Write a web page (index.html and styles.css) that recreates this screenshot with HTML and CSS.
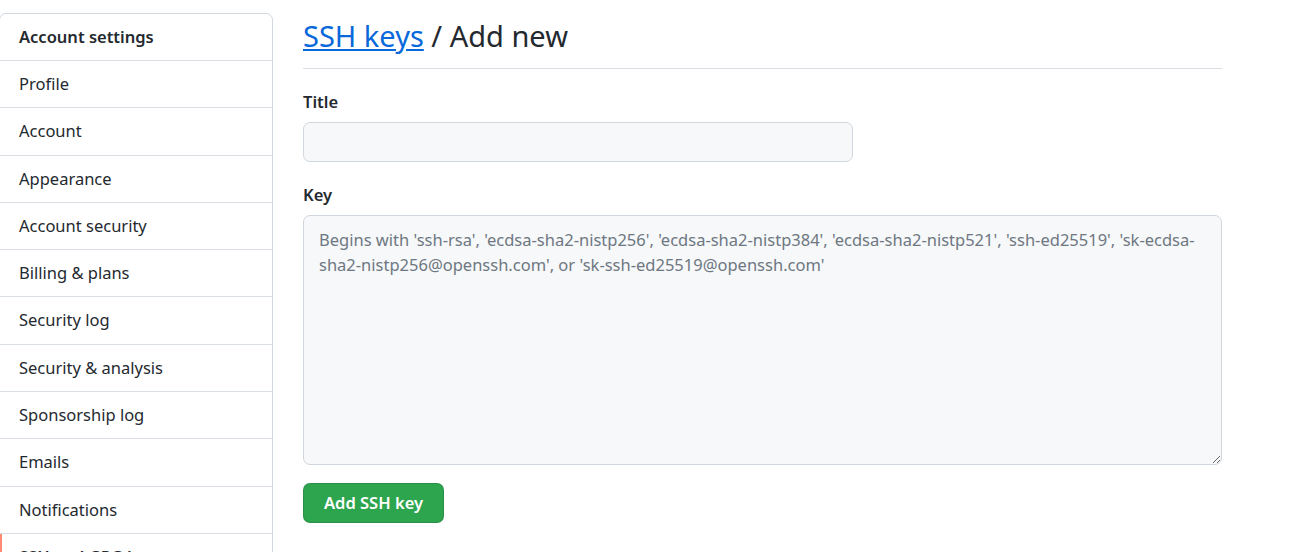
FILE: index.html
```html
<!DOCTYPE html>
<html lang="en">
<head>
<meta charset="utf-8">
<title>SSH keys / Add new</title>
<link rel="stylesheet" href="styles.css">
</head>
<body>
<div class="layout">
  <nav class="menu">
    <div class="menu-heading">Account settings</div>
    <a class="menu-item" href="#">Profile</a>
    <a class="menu-item" href="#">Account</a>
    <a class="menu-item" href="#">Appearance</a>
    <a class="menu-item" href="#">Account security</a>
    <a class="menu-item" href="#">Billing &amp; plans</a>
    <a class="menu-item" href="#">Security log</a>
    <a class="menu-item" href="#">Security &amp; analysis</a>
    <a class="menu-item" href="#">Sponsorship log</a>
    <a class="menu-item" href="#">Emails</a>
    <a class="menu-item" href="#">Notifications</a>
    <a class="menu-item selected" href="#">SSH and GPG keys</a>
    <a class="menu-item" href="#">Repositories</a>
  </nav>
  <main class="main">
    <div class="subhead">
      <h2 class="subhead-heading"><a class="subhead-link" href="#">SSH keys</a> / Add new</h2>
    </div>
    <form class="form">
      <div class="form-group">
        <label class="form-label" for="title">Title</label>
        <input class="form-input" id="title" type="text">
      </div>
      <div class="form-group form-group-last">
        <label class="form-label" for="key">Key</label>
        <textarea class="form-textarea" id="key" placeholder="Begins with 'ssh-rsa', 'ecdsa-sha2-nistp256', 'ecdsa-sha2-nistp384', 'ecdsa-sha2-nistp521', 'ssh-ed25519', 'sk-ecdsa-sha2-nistp256@openssh.com', or 'sk-ssh-ed25519@openssh.com'"></textarea>
      </div>
      <button class="btn-primary" type="button">Add SSH key</button>
    </form>
  </main>
</div>
</body>
</html>
```
FILE: styles.css
```css
html, body {
  margin: 0;
  padding: 0;
  height: 100%;
  overflow: hidden;
  background: #ffffff;
}

body {
  font-family: "Noto Sans", "Liberation Sans", sans-serif;
  font-size: 16.5px;
  line-height: 1.5;
  color: #24292f;
}

.layout {
  display: flex;
  align-items: flex-start;
  gap: 30px;
  padding-top: 13px;
  margin-left: -1px;
}

.menu {
  width: 274px;
  flex: none;
  box-sizing: border-box;
  border: 1px solid #d0d7de;
  border-radius: 7px;
  display: flex;
  flex-direction: column;
}

.menu-heading {
  padding: 10px 19px;
  font-weight: 600;
  line-height: 26px;
  border-bottom: 1px solid #d8dee4;
}

.menu-item {
  position: relative;
  display: block;
  padding: 10px 19px;
  line-height: 26.3px;
  color: #24292f;
  text-decoration: none;
  border-bottom: 1px solid #d8dee4;
}

.menu-item.selected {
  font-weight: 600;
}

.menu-item.selected::before {
  content: "";
  position: absolute;
  left: 0;
  top: 0;
  bottom: 0;
  width: 2px;
  background: #fd8c73;
}

.main {
  width: 919px;
  flex: none;
}

.subhead {
  padding-bottom: 10px;
  border-bottom: 1px solid #d8dee4;
  margin-bottom: 20px;
}

.subhead-heading {
  margin: 0;
  font-size: 29px;
  font-weight: 400;
  line-height: 45px;
}

.subhead-link {
  color: #0969da;
  text-decoration: underline;
}

.form {
  display: flex;
  flex-direction: column;
  align-items: flex-start;
}

.form-group {
  display: flex;
  flex-direction: column;
  align-items: flex-start;
  margin-bottom: 20px;
  width: 100%;
}

.form-group-last {
  margin-bottom: 18px;
}

.form-label {
  font-weight: 600;
  line-height: 26px;
  margin-bottom: 7px;
}

.form-input {
  box-sizing: border-box;
  width: 550px;
  height: 40px;
  padding: 6px 15px;
  font: inherit;
  background: #f6f8fa;
  border: 1px solid #d0d7de;
  border-radius: 7px;
  outline: none;
}

.form-textarea {
  box-sizing: border-box;
  width: 919px;
  height: 250px;
  padding: 11px 15px;
  font: inherit;
  line-height: 25px;
  color: #24292f;
  background: #f6f8fa;
  border: 1px solid #d0d7de;
  border-radius: 7px;
  outline: none;
  resize: both;
}

.form-textarea::placeholder {
  color: #6e7781;
  opacity: 1;
}

.btn-primary {
  height: 40px;
  padding: 0 20px;
  font: inherit;
  font-weight: 600;
  color: #ffffff;
  background: #2da44e;
  border: 1px solid rgba(27, 31, 36, 0.15);
  border-radius: 7px;
  cursor: pointer;
}
```
